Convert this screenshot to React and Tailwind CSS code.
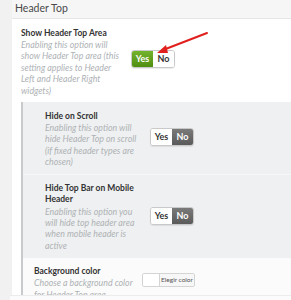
import React from 'react';

const font = { fontFamily: 'Lato, "Open Sans", sans-serif' };

const Toggle = ({ on }) => (
  <div className="flex h-[18px] w-[44px] overflow-hidden rounded-[3px] border border-[#c9c9c9] text-[9px] font-bold shadow-[0_1px_1px_rgba(0,0,0,0.08)]">
    <div
      className={
        on
          ? 'flex w-1/2 items-center justify-center bg-gradient-to-b from-[#74b32c] to-[#4f8e12] text-white'
          : 'flex w-1/2 items-center justify-center bg-white text-[#333]'
      }
    >
      Yes
    </div>
    <div
      className={
        on
          ? 'flex w-1/2 items-center justify-center bg-white text-[#333]'
          : 'flex w-1/2 items-center justify-center bg-gradient-to-b from-[#7a7a7a] to-[#5a5a5a] text-white'
      }
    >
      No
    </div>
  </div>
);

const Desc = ({ lines }) => (
  <div className="text-[8.8px] italic leading-[11.4px] text-[#aeb2b5]">
    {lines.map((l) => (
      <div key={l} className="whitespace-nowrap">{l}</div>
    ))}
  </div>
);

const App = () => {
  return (
    <div className="relative h-[300px] w-[291px] overflow-hidden bg-[#f1f1f1]" style={font}>
      <div className="ml-[12px] flex h-full flex-col bg-white">
        <div className="flex h-[20px] items-center border-b border-[#e6e6e6] bg-[#f6f6f6] pl-[3px] text-[10.5px] text-[#4a4a4a]">
          Header Top
        </div>

        <div className="flex pl-[9px] pt-[8px] pb-[6px]">
          <div className="w-[110px]">
            <div className="text-[8.5px] font-bold leading-[12px] text-[#333]">Show Header Top Area</div>
            <Desc
              lines={[
                'Enabling this option will',
                'show Header Top area (this',
                'setting applies to Header',
                'Left and Header Right',
                'widgets)',
              ]}
            />
          </div>
          <div className="mt-[23px]">
            <Toggle on />
          </div>
        </div>

        <div className="ml-[9px] flex flex-1 flex-col border-l-2 border-[#c8cbcd]">
          <div className="bg-[#eef0f1]">
            <div className="flex border-b border-[#f5f6f6] pl-[22px] pt-[8px] pb-[6px]">
              <div className="w-[105px]">
                <div className="text-[8.5px] font-bold leading-[12px] text-[#333]">Hide on Scroll</div>
                <Desc
                  lines={[
                    'Enabling this option will',
                    'hide Header Top on scroll',
                    '(if fixed header types are',
                    'chosen)',
                  ]}
                />
              </div>
              <div className="mt-[18px]">
                <Toggle />
              </div>
            </div>
            <div className="flex pl-[22px] pt-[8px] pb-[7px]">
              <div className="w-[105px]">
                <div className="text-[8.5px] font-bold leading-[11.5px] text-[#333]">
                  <div>Hide Top Bar on Mobile</div>
                  <div>Header</div>
                </div>
                <Desc
                  lines={[
                    'Enabling this option you',
                    'will hide top header area',
                    'when mobile header is',
                    'active',
                  ]}
                />
              </div>
              <div className="mt-[24px]">
                <Toggle />
              </div>
            </div>
          </div>

          <div className="flex flex-1 bg-[#fbfbfb] pl-[11px] pt-[7px]">
            <div className="w-[108px]">
              <div className="text-[8.5px] font-bold leading-[12px] text-[#333]">Background color</div>
              <Desc lines={['Choose a background color', 'for Header Top area']} />
            </div>
            <div className="mt-[8px] flex h-[14px] w-[53px] overflow-hidden rounded-[2px] border border-[#d4d4d4]">
              <div className="w-[17px] shrink-0 border-r border-[#d4d4d4] bg-white" />
              <div className="flex flex-1 items-center justify-center whitespace-nowrap bg-[#f7f7f7] text-[6.5px] text-[#555]">
                Elegir color
              </div>
            </div>
          </div>
        </div>
      </div>

      <div className="absolute bottom-0 left-[10px] right-0 h-[5px] border-t border-[#ececec] bg-[#fbfbfb]" />

      <svg className="absolute left-0 top-0" width="291" height="300" viewBox="0 0 291 300">
        <line x1="207" y1="33" x2="163" y2="50" stroke="#e0201e" strokeWidth="2" strokeLinecap="round" />
        <polygon points="157,53 166,45 168,53" fill="#e0201e" />
      </svg>
    </div>
  );
};

export default App;
